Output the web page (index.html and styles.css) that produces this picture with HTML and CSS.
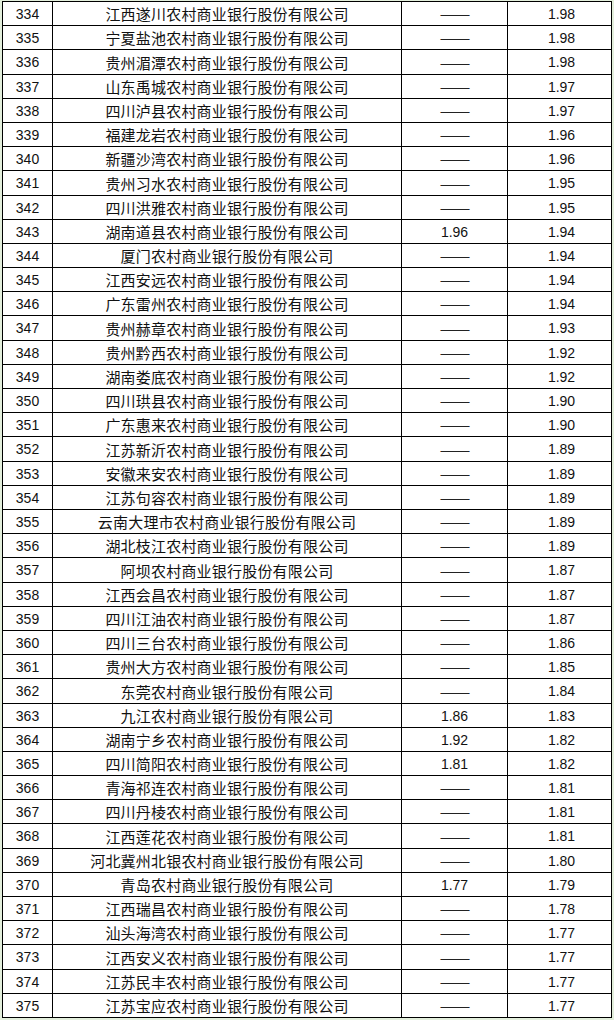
FILE: index.html
```html
<!DOCTYPE html>
<html lang="zh-CN">
<head>
<meta charset="utf-8">
<title>农村商业银行排名</title>
<link rel="stylesheet" href="styles.css">
</head>
<body>
<div class="sheet">
<div class="n">334</div><div class="name">江西遂川农村商业银行股份有限公司</div><div class="prev dash">——</div><div class="cur">1.98</div>
<div class="n">335</div><div class="name">宁夏盐池农村商业银行股份有限公司</div><div class="prev dash">——</div><div class="cur">1.98</div>
<div class="n">336</div><div class="name">贵州湄潭农村商业银行股份有限公司</div><div class="prev dash">——</div><div class="cur">1.98</div>
<div class="n">337</div><div class="name">山东禹城农村商业银行股份有限公司</div><div class="prev dash">——</div><div class="cur">1.97</div>
<div class="n">338</div><div class="name">四川泸县农村商业银行股份有限公司</div><div class="prev dash">——</div><div class="cur">1.97</div>
<div class="n">339</div><div class="name">福建龙岩农村商业银行股份有限公司</div><div class="prev dash">——</div><div class="cur">1.96</div>
<div class="n">340</div><div class="name">新疆沙湾农村商业银行股份有限公司</div><div class="prev dash">——</div><div class="cur">1.96</div>
<div class="n">341</div><div class="name">贵州习水农村商业银行股份有限公司</div><div class="prev dash">——</div><div class="cur">1.95</div>
<div class="n">342</div><div class="name">四川洪雅农村商业银行股份有限公司</div><div class="prev dash">——</div><div class="cur">1.95</div>
<div class="n">343</div><div class="name">湖南道县农村商业银行股份有限公司</div><div class="prev">1.96</div><div class="cur">1.94</div>
<div class="n">344</div><div class="name">厦门农村商业银行股份有限公司</div><div class="prev dash">——</div><div class="cur">1.94</div>
<div class="n">345</div><div class="name">江西安远农村商业银行股份有限公司</div><div class="prev dash">——</div><div class="cur">1.94</div>
<div class="n">346</div><div class="name">广东雷州农村商业银行股份有限公司</div><div class="prev dash">——</div><div class="cur">1.94</div>
<div class="n">347</div><div class="name">贵州赫章农村商业银行股份有限公司</div><div class="prev dash">——</div><div class="cur">1.93</div>
<div class="n">348</div><div class="name">贵州黔西农村商业银行股份有限公司</div><div class="prev dash">——</div><div class="cur">1.92</div>
<div class="n">349</div><div class="name">湖南娄底农村商业银行股份有限公司</div><div class="prev dash">——</div><div class="cur">1.92</div>
<div class="n">350</div><div class="name">四川珙县农村商业银行股份有限公司</div><div class="prev dash">——</div><div class="cur">1.90</div>
<div class="n">351</div><div class="name">广东惠来农村商业银行股份有限公司</div><div class="prev dash">——</div><div class="cur">1.90</div>
<div class="n">352</div><div class="name">江苏新沂农村商业银行股份有限公司</div><div class="prev dash">——</div><div class="cur">1.89</div>
<div class="n">353</div><div class="name">安徽来安农村商业银行股份有限公司</div><div class="prev dash">——</div><div class="cur">1.89</div>
<div class="n">354</div><div class="name">江苏句容农村商业银行股份有限公司</div><div class="prev dash">——</div><div class="cur">1.89</div>
<div class="n">355</div><div class="name">云南大理市农村商业银行股份有限公司</div><div class="prev dash">——</div><div class="cur">1.89</div>
<div class="n">356</div><div class="name">湖北枝江农村商业银行股份有限公司</div><div class="prev dash">——</div><div class="cur">1.89</div>
<div class="n">357</div><div class="name">阿坝农村商业银行股份有限公司</div><div class="prev dash">——</div><div class="cur">1.87</div>
<div class="n">358</div><div class="name">江西会昌农村商业银行股份有限公司</div><div class="prev dash">——</div><div class="cur">1.87</div>
<div class="n">359</div><div class="name">四川江油农村商业银行股份有限公司</div><div class="prev dash">——</div><div class="cur">1.87</div>
<div class="n">360</div><div class="name">四川三台农村商业银行股份有限公司</div><div class="prev dash">——</div><div class="cur">1.86</div>
<div class="n">361</div><div class="name">贵州大方农村商业银行股份有限公司</div><div class="prev dash">——</div><div class="cur">1.85</div>
<div class="n">362</div><div class="name">东莞农村商业银行股份有限公司</div><div class="prev dash">——</div><div class="cur">1.84</div>
<div class="n">363</div><div class="name">九江农村商业银行股份有限公司</div><div class="prev">1.86</div><div class="cur">1.83</div>
<div class="n">364</div><div class="name">湖南宁乡农村商业银行股份有限公司</div><div class="prev">1.92</div><div class="cur">1.82</div>
<div class="n">365</div><div class="name">四川简阳农村商业银行股份有限公司</div><div class="prev">1.81</div><div class="cur">1.82</div>
<div class="n">366</div><div class="name">青海祁连农村商业银行股份有限公司</div><div class="prev dash">——</div><div class="cur">1.81</div>
<div class="n">367</div><div class="name">四川丹棱农村商业银行股份有限公司</div><div class="prev dash">——</div><div class="cur">1.81</div>
<div class="n">368</div><div class="name">江西莲花农村商业银行股份有限公司</div><div class="prev dash">——</div><div class="cur">1.81</div>
<div class="n">369</div><div class="name">河北冀州北银农村商业银行股份有限公司</div><div class="prev dash">——</div><div class="cur">1.80</div>
<div class="n">370</div><div class="name">青岛农村商业银行股份有限公司</div><div class="prev">1.77</div><div class="cur">1.79</div>
<div class="n">371</div><div class="name">江西瑞昌农村商业银行股份有限公司</div><div class="prev dash">——</div><div class="cur">1.78</div>
<div class="n">372</div><div class="name">汕头海湾农村商业银行股份有限公司</div><div class="prev dash">——</div><div class="cur">1.77</div>
<div class="n">373</div><div class="name">江西安义农村商业银行股份有限公司</div><div class="prev dash">——</div><div class="cur">1.77</div>
<div class="n">374</div><div class="name">江苏民丰农村商业银行股份有限公司</div><div class="prev dash">——</div><div class="cur">1.77</div>
<div class="n">375</div><div class="name">江苏宝应农村商业银行股份有限公司</div><div class="prev dash">——</div><div class="cur">1.77</div>
</div>
</body>
</html>
```
FILE: styles.css
```css
html, body {
  margin: 0;
  padding: 0;
  background: #e3efdc;
}

.sheet {
  margin: 1px 0 0 2px;
  width: 610px;
  box-sizing: border-box;
  padding: 1px;
  background: #000;
  display: grid;
  grid-template-columns: 49px 348px 105px 103px;
  grid-template-rows:
    23px 23px 24px 23px 23px 23px 23px 24px 23px 23px
    23px 23px 23px 24px 23px 23px 23px 23px 24px 23px
    23px 23px 23px 24px 23px 23px 23px 23px 24px 23px
    23px 23px 23px 23px 24px 23px 23px 23px 23px 24px
    23px 23px;
  gap: 1px;
}

.sheet > div {
  background: #fff;
  display: flex;
  align-items: center;
  justify-content: center;
  color: #111;
  white-space: nowrap;
  overflow: hidden;
}

.n, .prev, .cur {
  font-family: "Liberation Sans", Arial, sans-serif;
  font-size: 14px;
}

.cur {
  padding-left: 4px;
}

.name {
  font-family: "Noto Sans CJK SC", "Noto Sans", sans-serif;
  font-size: 15px;
  letter-spacing: 0.2px;
  color: #1a1a1a;
}

.prev.dash {
  font-family: "Liberation Sans", sans-serif;
  font-size: 15px;
  letter-spacing: -1px;
  color: #222;
}
```
